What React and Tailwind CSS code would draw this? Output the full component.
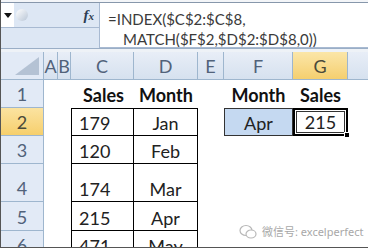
import React from "react";

const F = { fontFamily: "Lato, 'Liberation Sans', sans-serif" };

function ColHead({ label, sel, last }) {
  return (
    <div
      className={`flex items-center justify-center border-r border-b border-[#9eb6ce] text-[18px] leading-[20px] ${
        sel
          ? "bg-gradient-to-b from-[#fbe6a8] to-[#f5cf6e] text-[#4a4a3a]"
          : "bg-gradient-to-b from-[#e8eef7] to-[#d6e1ef] text-[#51627a]"
      } ${last ? "border-r-0" : ""}`}
    >
      {label}
    </div>
  );
}

function RowHead({ n, sel }) {
  return (
    <div
      className={`flex items-end justify-center pb-[3px] border-r border-b border-[#9eb6ce] text-[18px] leading-[20px] ${
        sel ? "bg-gradient-to-b from-[#fbe3a0] to-[#f6cf6c] text-[#4a4a3a]" : "bg-[#e2eaf6] text-[#51627a]"
      }`}
    >
      {n}
    </div>
  );
}

export default function App() {
  const rows = [
    { n: 2, s: "179", m: "Jan" },
    { n: 3, s: "120", m: "Feb" },
    { n: 4, s: "174", m: "Mar" },
    { n: 5, s: "215", m: "Apr" },
    { n: 6, s: "471", m: "May" },
  ];
  const cell = "flex items-end pb-[2px] text-[18px] leading-[20px] text-[#222]";
  const head = "flex items-end justify-center pb-[3px] font-bold text-[18px] leading-[20px] text-[#111]";
  return (
    <div className="w-[368px] h-[248px] overflow-hidden bg-white relative border-l border-b border-[#555]" style={F}>
      {/* formula bar */}
      <div className="h-[3px] bg-[#f3f5f8] border-b border-[#8797ab]" />
      <div className="flex h-[45px] bg-[#dde7f4]">
        <div className="w-[98px] flex flex-col">
          <div className="flex h-[25px] border-b border-[#a8bad2]">
            <div className="w-[13px] bg-white flex items-center justify-center">
              <svg width="8" height="5" viewBox="0 0 8 5"><path d="M0 0h8L4 5z" fill="#111" /></svg>
            </div>
            <div className="w-[18px] flex items-center">
              <div className="w-[12px] h-[12px] rounded-full bg-gradient-to-br from-white to-[#b9c6d6] ml-[2px]" />
            </div>
            <div className="flex-1 flex items-center justify-end pr-[5px]">
              <span className="italic font-bold text-[15px] text-[#2d3d52]" style={{ fontFamily: "'Liberation Serif', serif" }}>
                f<span className="text-[11px]">x</span>
              </span>
            </div>
          </div>
        </div>
        <div className="flex-1 bg-white border-l border-b border-[#a8bad2] text-[15px] text-[#3a3a3a] leading-[20px] pt-[6px]">
          <div className="pl-[8px]">=INDEX($C$2:$C$8,</div>
          <div className="pl-[23px]">MATCH($F$2,$D$2:$D$8,0))</div>
        </div>
      </div>
      <div className="h-[4px] bg-[#eef2f7] border-t border-[#9aaec6]" />

      {/* grid */}
      <div className="grid grid-cols-[43px_14px_13px_63px_64px_26px_69px_55px_1fr] grid-rows-[28px_28px_28px_28px_38px_29px_28px]">
        <div className="border-r border-b border-[#9eb6ce] bg-[#e2eaf6] flex items-end justify-end p-[4px]">
          <svg width="24" height="18" viewBox="0 0 24 18"><path d="M24 0V18H0z" fill="#b4c2d4" /></svg>
        </div>
        <ColHead label="A" />
        <ColHead label="B" />
        <ColHead label="C" />
        <ColHead label="D" />
        <ColHead label="E" />
        <ColHead label="F" />
        <ColHead label="G" sel />
        <ColHead label="" last />

        {/* row 1 */}
        <RowHead n={1} />
        <div />
        <div />
        <div className={`${head} pl-[2px]`}>Sales</div>
        <div className={head}>Month</div>
        <div />
        <div className={head}>Month</div>
        <div className={head}>Sales</div>
        <div />

        {rows.map((r) => (
          <React.Fragment key={r.n}>
            <RowHead n={r.n} sel={r.n === 2} />
            <div />
            <div />
            <div className={`${cell} pl-[7px] border-l border-r border-b border-black ${r.n === 2 ? "border-t" : ""}`}>
              {r.s}
            </div>
            <div className={`${cell} justify-center border-r border-b border-black ${r.n === 2 ? "border-t" : ""}`}>
              {r.m}
            </div>
            <div />
            {r.n === 2 ? (
              <>
                <div className={`${cell} justify-center bg-[#c5d9f1] border border-[#333]`}>Apr</div>
                <div className="relative border-2 border-black p-[1px] flex">
                  <div className="flex-1 border border-[#333] flex items-end justify-center pb-[0px] text-[18px] leading-[20px] text-[#222]">215</div>
                  <div className="absolute -right-[4px] -bottom-[4px] w-[6px] h-[6px] bg-black border border-white" />
                </div>
              </>
            ) : (
              <>
                <div />
                <div />
              </>
            )}
            <div />
          </React.Fragment>
        ))}
      </div>

      {/* watermark */}
      <div className="absolute left-[238px] top-[224px] flex items-center gap-[5px] whitespace-nowrap text-[11px] text-[#a8a8a8]" style={{ fontFamily: "'Noto Sans', 'Noto Sans CJK SC', sans-serif" }}>
        <svg width="18" height="16" viewBox="0 0 18 16" fill="none" stroke="#b8b8b8" strokeWidth="1.2">
          <ellipse cx="7" cy="6.5" rx="6" ry="5" />
          <ellipse cx="12" cy="10" rx="5" ry="4" fill="white" />
        </svg>
        <span>微信号: excelperfect</span>
      </div>
    </div>
  );
}
